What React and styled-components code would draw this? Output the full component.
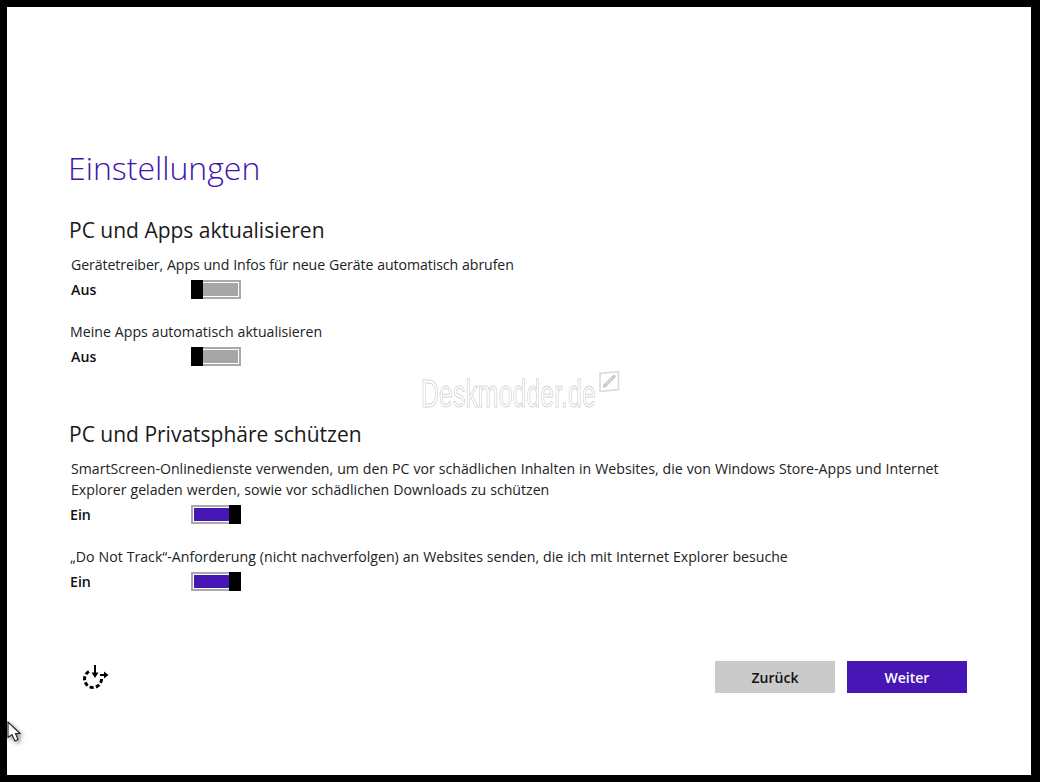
import React from "react";
import styled, { createGlobalStyle } from "styled-components";

const Global = createGlobalStyle`
  html, body { margin: 0; padding: 0; background: #000; }
  #root { width: 1040px; height: 782px; overflow: hidden; }
`;

const Frame = styled.div`
  width: 1040px; height: 782px; box-sizing: border-box; padding: 7px 9px 7px 7px; background: #000;
`;
const Screen = styled.main`
  position: relative; width: 1024px; height: 768px; background: #fff; box-sizing: border-box;
  padding: 142px 64px 0 61px; display: flex; flex-direction: column;
  font-family: "Open Sans", "Noto Sans", sans-serif; color: #111;
`;
const Title = styled.h1`
  margin: 0; font-size: 32px; line-height: 38px; font-weight: 300; color: #4113ae;
`;
const Section = styled.section`
  margin-top: ${p => p.$top}px; display: flex; flex-direction: column;
`;
const Heading = styled.h2`
  margin: 0 0 0 1px; font-size: 21px; line-height: 28px; font-weight: 400; color: #1a1a1a;
`;
const Setting = styled.div`
  margin-top: ${p => p.$top}px; display: flex; flex-direction: column;
`;
const Description = styled.p`
  margin: 0; padding-left: ${p => p.$indent}px; font-size: 14.15px; line-height: 21px; color: #222;
  word-spacing: 0.3px; letter-spacing: ${p => p.$tracking || 0}px;
`;
const ToggleRow = styled.div`
  margin-top: 5px; display: flex; align-items: center; height: 19px;
`;
const StateLabel = styled.span`
  box-sizing: border-box; width: 123px; padding-left: ${p => p.$indent}px;
  font-size: 14.2px; font-weight: 600; color: #111;
`;
const Toggle = styled.div`
  position: relative; width: 50px; height: 19px; box-sizing: border-box;
  border: 2px solid #a9a9a9; display: flex;
`;
const Fill = styled.div`
  flex: 1; border: 1px solid #fff; background: ${p => (p.$on ? "#4617b4" : "#a6a6a6")};
`;
const Thumb = styled.div`
  position: absolute; top: -2px; ${p => (p.$on ? "right: -2px" : "left: -2px")};
  width: 12px; height: 19px; background: #000;
`;
const Watermark = styled.div`
  position: absolute; left: 414px; top: 366px; display: flex; align-items: flex-start;
`;
const WatermarkText = styled.span`
  display: block; font-family: "Liberation Sans", sans-serif; font-size: 39px; line-height: 42px;
  color: #fff; -webkit-text-stroke: 1px #d4d4d4; transform: scaleX(0.64); transform-origin: left top;
  width: 177px; white-space: nowrap;
`;
const WatermarkIcon = styled.svg`
  display: block; width: 22px; height: 23px; margin-top: -3px;
`;
const Footer = styled.footer`
  position: absolute; left: 73px; right: 64px; top: 654px; height: 32px;
  display: flex; align-items: center; justify-content: space-between;
`;
const Buttons = styled.div`
  display: flex; gap: 12px;
`;
const Button = styled.button`
  width: 120px; height: 32px; border: 0; padding: 0; font-family: "Open Sans", sans-serif;
  font-size: 14px; font-weight: 600;
  background: ${p => (p.$primary ? "#4617b4" : "#cacaca")};
  color: ${p => (p.$primary ? "#fff" : "#111")};
`;
const Spinner = styled.svg`
  display: block; width: 29px; height: 26px;
`;
const Cursor = styled.svg`
  position: absolute; left: 0; top: 714px; width: 16px; height: 24px;
  filter: drop-shadow(2px 2px 2px rgba(0, 0, 0, 0.45));
`;

const Switch = ({ on }) => (
  <Toggle>
    <Fill $on={on} />
    <Thumb $on={on} />
  </Toggle>
);

const Item = ({ top, indent, labelIndent, tracking, on, children }) => (
  <Setting $top={top}>
    <Description $indent={indent} $tracking={tracking}>{children}</Description>
    <ToggleRow>
      <StateLabel $indent={labelIndent}>{on ? "Ein" : "Aus"}</StateLabel>
      <Switch on={on} />
    </ToggleRow>
  </Setting>
);

export default function App() {
  return (
    <Frame>
      <Global />
      <Screen>
        <Title>Einstellungen</Title>
        <Section $top={29}>
          <Heading>PC und Apps aktualisieren</Heading>
          <Item top={10} indent={3} labelIndent={3} tracking={-0.08} on={false}>Gerätetreiber, Apps und Infos für neue Geräte automatisch abrufen</Item>
          <Item top={22} indent={2} labelIndent={3} on={false}>Meine Apps automatisch aktualisieren</Item>
        </Section>
        <Section $top={54}>
          <Heading>PC und Privatsphäre schützen</Heading>
          <Item top={10} indent={3} labelIndent={2} on>
            SmartScreen-Onlinedienste verwenden, um den PC vor schädlichen Inhalten in Websites, die von Windows Store-Apps und Internet<br />
            Explorer geladen werden, sowie vor schädlichen Downloads zu schützen
          </Item>
          <Item top={22} indent={2} labelIndent={2} on>„Do Not Track“-Anforderung (nicht nachverfolgen) an Websites senden, die ich mit Internet Explorer besuche</Item>
        </Section>
        <Watermark>
          <WatermarkText>Deskmodder.de</WatermarkText>
          <WatermarkIcon viewBox="0 0 22 23">
            <path d="M2 3.5 L20.5 1.5 L20.5 19.5 L2 21.5 Z" fill="#fff" stroke="#d8d8d8" strokeWidth="1.5" />
            <path d="M6.5 16 L16 6.5" stroke="#c8c8c8" strokeWidth="3.5" strokeLinecap="round" />
            <path d="M8 14.5 L15 7.5" stroke="#f0f0f0" strokeWidth="1" />
          </WatermarkIcon>
        </Watermark>
        <Footer>
          <Spinner viewBox="0 0 29 26">
            <path d="M21.5 15 A8.5 8.5 0 1 1 11 6.7" fill="none" stroke="#000" strokeWidth="3" strokeDasharray="4 2.3" />
            <path d="M15 1 V10" stroke="#000" strokeWidth="2" fill="none" />
            <path d="M11.5 8.5 L18.5 8.5 L15 14 Z" fill="#000" />
            <path d="M20 11 H25" stroke="#000" strokeWidth="2" fill="none" />
            <path d="M24 7.5 L28.5 11 L24 14.5 Z" fill="#000" />
          </Spinner>
          <Buttons>
            <Button>Zurück</Button>
            <Button $primary>Weiter</Button>
          </Buttons>
        </Footer>
        <Cursor viewBox="0 0 16 24">
          <path d="M1 1 L1 16.5 L5 13.5 L8 20 L11 18.5 L8.5 12.5 L13 12.5 Z" fill="#fff" stroke="#222" strokeWidth="1.1" />
        </Cursor>
      </Screen>
    </Frame>
  );
}
